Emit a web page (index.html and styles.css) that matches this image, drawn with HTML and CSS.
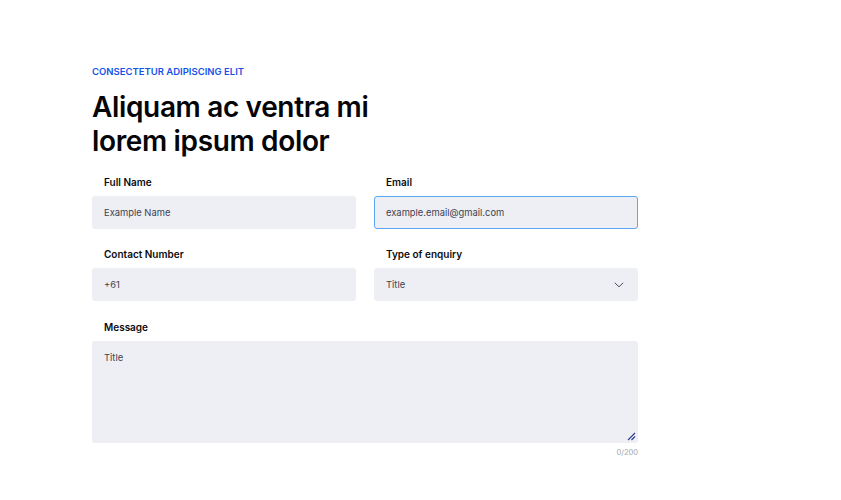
FILE: index.html
```html
<!DOCTYPE html>
<html>
<head>
<meta charset="utf-8">
<link rel="stylesheet" href="styles.css">
</head>
<body>
<main class="page">
  <p class="eyebrow">CONSECTETUR ADIPISCING ELIT</p>
  <h1 class="title">Aliquam ac ventra mi<br>lorem ipsum dolor</h1>
  <form class="form">
    <div class="field">
      <label class="label">Full Name</label>
      <div class="input"><span class="value">Example Name</span></div>
    </div>
    <div class="field">
      <label class="label">Email</label>
      <div class="input focused"><span class="value">example.email@gmail.com</span></div>
    </div>
    <div class="field">
      <label class="label">Contact Number</label>
      <div class="input"><span class="value">+61</span></div>
    </div>
    <div class="field">
      <label class="label">Type of enquiry</label>
      <div class="input select"><span class="value">Title</span>
        <svg class="chev" width="10" height="6" viewBox="0 0 10 6"><path d="M0.8 0.8 L5 4.8 L9.2 0.8" fill="none" stroke="#4a4f5c" stroke-width="1"/></svg>
      </div>
    </div>
    <div class="field wide">
      <label class="label">Message</label>
      <div class="textarea"><span class="value">Title</span>
        <svg class="grip" width="9" height="9" viewBox="0 0 9 9"><path d="M1 8 L8 1 M4.5 8 L8 4.5" stroke="#2b3a8f" stroke-width="1.1"/></svg>
      </div>
      <div class="counter">0/200</div>
    </div>
  </form>
</main>
</body>
</html>
```

FILE: styles.css
```css
* { box-sizing: border-box; }
body {
  margin: 0;
  background: #fff;
  font-family: Inter, "Noto Sans", sans-serif;
  color: #0b0b0f;
}
.page {
  width: 546px;
  margin-left: 92px;
  padding-top: 66px;
}
.eyebrow {
  margin: 0;
  font-size: 9.5px;
  line-height: 12px;
  font-weight: 600;
  color: #1552e8;
}
.title {
  margin: 12px 0 0;
  font-size: 28px;
  line-height: 34px;
  font-weight: 600;
  letter-spacing: -0.35px;
  color: #050507;
}
.form {
  margin-top: 18px;
  display: grid;
  grid-template-columns: 1fr 1fr;
  column-gap: 18px;
  row-gap: 19px;
}
.field { display: flex; flex-direction: column; }
.wide { grid-column: 1 / 3; margin-top: 1px; }
.label {
  font-size: 10px;
  line-height: 12px;
  font-weight: 600;
  padding-left: 12px;
  margin-bottom: 8px;
  color: #0b0b0f;
}
.input {
  height: 33px;
  background: #eeeff4;
  border-radius: 3px;
  display: flex;
  align-items: center;
  padding: 0 11px;
  border: 1px solid transparent;
}
.input.focused { border-color: #5ca8f2; }
.value {
  font-size: 9.4px;
  line-height: 12px;
  color: #3d4250;
}
.select { justify-content: space-between; }
.chev { margin-right: 2px; }
.textarea {
  position: relative;
  height: 102px;
  background: #eeeff4;
  border-radius: 3px;
  padding: 10px 12px;
  font-size: 10px;
  line-height: 12px;
}
.grip {
  position: absolute;
  right: 2px;
  bottom: 2px;
}
.counter {
  text-align: right;
  font-size: 7.5px;
  color: #a3a6ad;
  margin-top: 5px;
}
```
